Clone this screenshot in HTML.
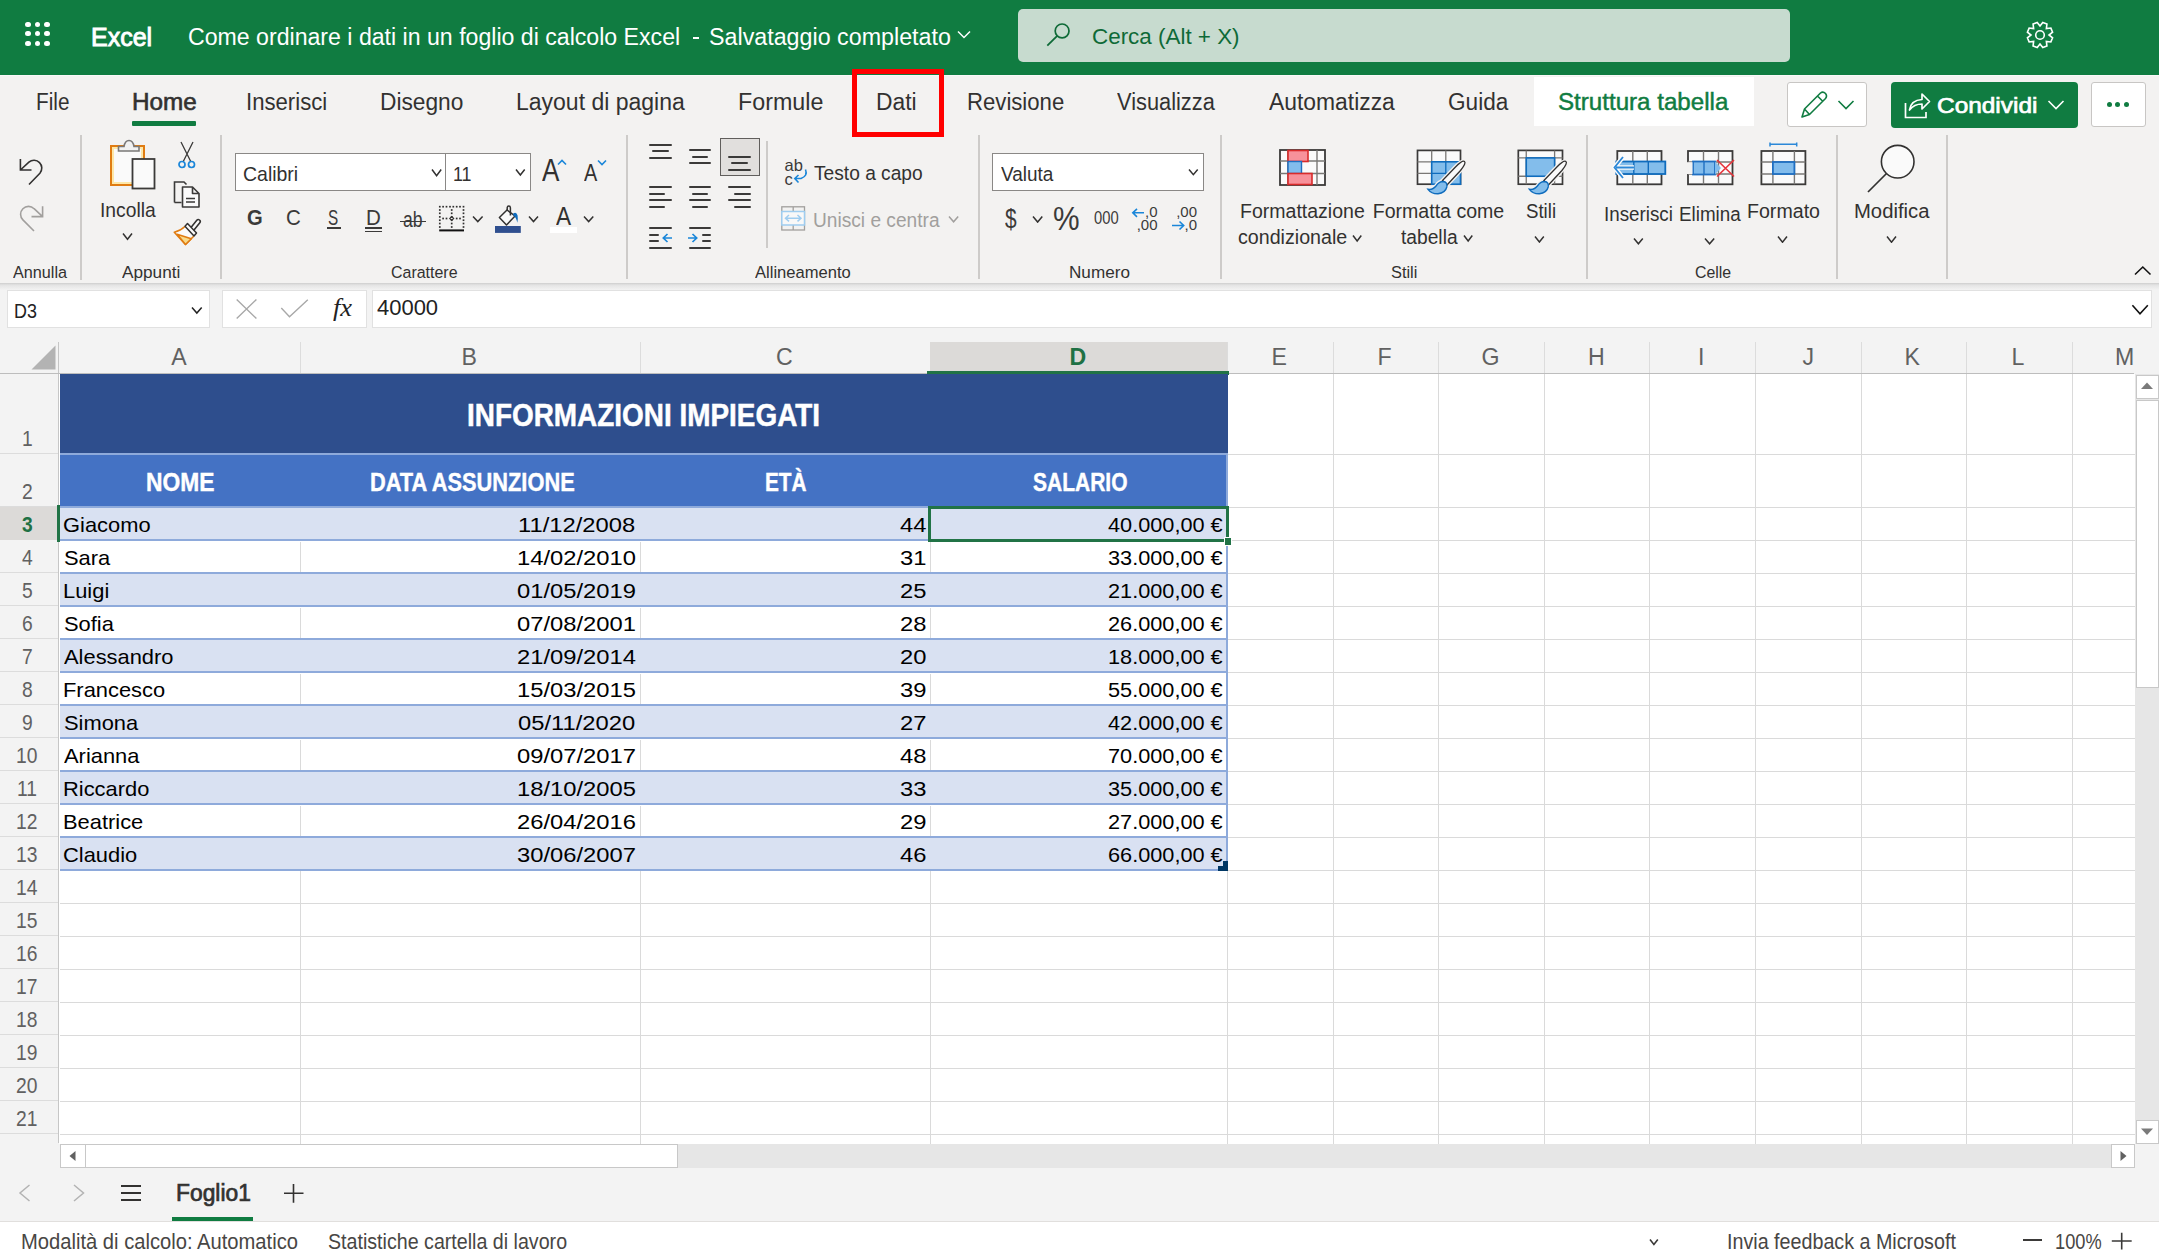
<!DOCTYPE html><html><head><meta charset="utf-8"><style>*{margin:0;padding:0}html,body{width:2159px;height:1257px;overflow:hidden;background:#fff;position:relative}div,svg{position:absolute}.t{white-space:pre;transform-origin:0 0;line-height:40px;height:40px}</style></head><body>
<div style="left:0.00px;top:0.00px;width:2159.00px;height:75.00px;background:#107c41"></div>
<div style="left:0.00px;top:75.00px;width:2159.00px;height:1.00px;background:#f8f8f8"></div>
<div style="left:25.40px;top:21.65px;width:5.20px;height:5.20px;background:#fff;border-radius:50%"></div>
<div style="left:25.40px;top:31.15px;width:5.20px;height:5.20px;background:#fff;border-radius:50%"></div>
<div style="left:25.40px;top:40.90px;width:5.20px;height:5.20px;background:#fff;border-radius:50%"></div>
<div style="left:34.90px;top:21.65px;width:5.20px;height:5.20px;background:#fff;border-radius:50%"></div>
<div style="left:34.90px;top:31.15px;width:5.20px;height:5.20px;background:#fff;border-radius:50%"></div>
<div style="left:34.90px;top:40.90px;width:5.20px;height:5.20px;background:#fff;border-radius:50%"></div>
<div style="left:44.40px;top:21.65px;width:5.20px;height:5.20px;background:#fff;border-radius:50%"></div>
<div style="left:44.40px;top:31.15px;width:5.20px;height:5.20px;background:#fff;border-radius:50%"></div>
<div style="left:44.40px;top:40.90px;width:5.20px;height:5.20px;background:#fff;border-radius:50%"></div>
<div style="left:692.50px;top:36.50px;width:6.50px;height:2.00px;background:#fff"></div>
<div style="left:1018.00px;top:9.00px;width:772.00px;height:52.50px;background:#c7dbcf;border-radius:5px"></div>
<div style="left:0.00px;top:76.00px;width:2159.00px;height:207.00px;background:#f3f2f1"></div>
<div style="left:132.00px;top:121.00px;width:64.00px;height:4.70px;background:#107c41;border-radius:1px"></div>
<div style="left:1534.00px;top:76.50px;width:220.00px;height:49.50px;background:#fff"></div>
<div style="left:1787.40px;top:82.40px;width:80.00px;height:45.00px;background:#fff;border:1px solid #c8c6c4;border-radius:3px;box-sizing:border-box"></div>
<div style="left:1891.00px;top:82.00px;width:187.00px;height:45.70px;background:#107c41;border-radius:4px"></div>
<div style="left:2091.20px;top:82.40px;width:54.50px;height:45.00px;background:#fff;border:1px solid #c8c6c4;border-radius:3px;box-sizing:border-box"></div>
<div style="left:2106.50px;top:101.70px;width:5.20px;height:5.20px;background:#107c41;border-radius:50%"></div>
<div style="left:2115.30px;top:101.70px;width:5.20px;height:5.20px;background:#107c41;border-radius:50%"></div>
<div style="left:2124.10px;top:101.70px;width:5.20px;height:5.20px;background:#107c41;border-radius:50%"></div>
<div style="left:851.50px;top:68.50px;width:92.00px;height:68.00px;border:5px solid #ff0000;box-sizing:border-box"></div>
<div style="left:80.00px;top:135.00px;width:2.00px;height:145.00px;background:#cdcbc9"></div>
<div style="left:220.00px;top:135.00px;width:2.00px;height:144.00px;background:#cdcbc9"></div>
<div style="left:626.00px;top:135.00px;width:2.00px;height:144.00px;background:#cdcbc9"></div>
<div style="left:766.00px;top:141.00px;width:2.00px;height:107.00px;background:#cdcbc9"></div>
<div style="left:978.00px;top:135.00px;width:2.00px;height:144.00px;background:#cdcbc9"></div>
<div style="left:1220.00px;top:135.00px;width:2.00px;height:144.00px;background:#cdcbc9"></div>
<div style="left:1586.00px;top:135.00px;width:2.00px;height:144.00px;background:#cdcbc9"></div>
<div style="left:1836.00px;top:135.00px;width:2.00px;height:144.00px;background:#cdcbc9"></div>
<div style="left:1946.00px;top:135.00px;width:2.00px;height:144.00px;background:#cdcbc9"></div>
<div style="left:235.20px;top:153.30px;width:296.00px;height:38.20px;background:#fff;border:1px solid #8a8886;box-sizing:border-box"></div>
<div style="left:445.00px;top:153.30px;width:1.00px;height:38.20px;background:#8a8886"></div>
<div style="left:327.20px;top:227.00px;width:13.40px;height:1.80px;background:#3b3a39"></div>
<div style="left:365.00px;top:227.00px;width:17.00px;height:1.80px;background:#3b3a39"></div>
<div style="left:365.00px;top:230.60px;width:17.00px;height:1.80px;background:#3b3a39"></div>
<div style="left:400.00px;top:220.50px;width:25.70px;height:1.60px;background:#3b3a39"></div>
<div style="left:549.90px;top:227.00px;width:26.80px;height:5.60px;background:#fff"></div>
<div style="left:649.00px;top:144.00px;width:23.00px;height:2.00px;background:#3b3a39;border-radius:1px"></div>
<div style="left:652.00px;top:150.00px;width:17.00px;height:2.00px;background:#3b3a39;border-radius:1px"></div>
<div style="left:649.00px;top:157.00px;width:23.00px;height:2.00px;background:#3b3a39;border-radius:1px"></div>
<div style="left:689.00px;top:149.00px;width:22.00px;height:2.00px;background:#3b3a39;border-radius:1px"></div>
<div style="left:692.00px;top:156.00px;width:16.00px;height:2.00px;background:#3b3a39;border-radius:1px"></div>
<div style="left:689.00px;top:162.00px;width:22.00px;height:2.00px;background:#3b3a39;border-radius:1px"></div>
<div style="left:720.20px;top:138.30px;width:39.60px;height:38.20px;background:#e1dfdd;border:1.2px solid #605e5c;box-sizing:border-box"></div>
<div style="left:728.00px;top:156.00px;width:23.00px;height:2.00px;background:#3b3a39;border-radius:1px"></div>
<div style="left:731.00px;top:162.00px;width:17.00px;height:2.00px;background:#3b3a39;border-radius:1px"></div>
<div style="left:728.00px;top:169.00px;width:23.00px;height:2.00px;background:#3b3a39;border-radius:1px"></div>
<div style="left:649.00px;top:186.00px;width:23.00px;height:2.00px;background:#3b3a39;border-radius:1px"></div>
<div style="left:649.00px;top:193.00px;width:16.00px;height:2.00px;background:#3b3a39;border-radius:1px"></div>
<div style="left:649.00px;top:199.00px;width:23.00px;height:2.00px;background:#3b3a39;border-radius:1px"></div>
<div style="left:649.00px;top:206.00px;width:16.00px;height:2.00px;background:#3b3a39;border-radius:1px"></div>
<div style="left:689.00px;top:186.00px;width:22.00px;height:2.00px;background:#3b3a39;border-radius:1px"></div>
<div style="left:692.00px;top:193.00px;width:16.00px;height:2.00px;background:#3b3a39;border-radius:1px"></div>
<div style="left:689.00px;top:199.00px;width:22.00px;height:2.00px;background:#3b3a39;border-radius:1px"></div>
<div style="left:692.00px;top:206.00px;width:16.00px;height:2.00px;background:#3b3a39;border-radius:1px"></div>
<div style="left:728.00px;top:186.00px;width:23.00px;height:2.00px;background:#3b3a39;border-radius:1px"></div>
<div style="left:734.00px;top:193.00px;width:17.00px;height:2.00px;background:#3b3a39;border-radius:1px"></div>
<div style="left:728.00px;top:199.00px;width:23.00px;height:2.00px;background:#3b3a39;border-radius:1px"></div>
<div style="left:734.00px;top:206.00px;width:17.00px;height:2.00px;background:#3b3a39;border-radius:1px"></div>
<div style="left:649.00px;top:227.00px;width:23.00px;height:2.00px;background:#3b3a39;border-radius:1px"></div>
<div style="left:649.00px;top:234.00px;width:10.00px;height:2.00px;background:#3b3a39;border-radius:1px"></div>
<div style="left:649.00px;top:240.00px;width:10.00px;height:2.00px;background:#3b3a39;border-radius:1px"></div>
<div style="left:649.00px;top:247.00px;width:23.00px;height:2.00px;background:#3b3a39;border-radius:1px"></div>
<div style="left:689.00px;top:227.00px;width:22.00px;height:2.00px;background:#3b3a39;border-radius:1px"></div>
<div style="left:702.00px;top:234.00px;width:9.00px;height:2.00px;background:#3b3a39;border-radius:1px"></div>
<div style="left:702.00px;top:240.00px;width:9.00px;height:2.00px;background:#3b3a39;border-radius:1px"></div>
<div style="left:689.00px;top:247.00px;width:22.00px;height:2.00px;background:#3b3a39;border-radius:1px"></div>
<div style="left:992.20px;top:153.30px;width:211.50px;height:38.20px;background:#fff;border:1px solid #8a8886;box-sizing:border-box"></div>
<div style="left:0.00px;top:290.00px;width:2159.00px;height:50.00px;background:#f3f3f3"></div>
<div style="left:0.00px;top:283.00px;width:2159.00px;height:7.00px;background:linear-gradient(#cecece,#e4e4e4 30%,#f3f3f3)"></div>
<div style="left:6.50px;top:290.40px;width:203.00px;height:37.80px;background:#fff;border:1px solid #e1e1e1;box-sizing:border-box"></div>
<div style="left:222.30px;top:290.40px;width:144.50px;height:37.40px;background:#fff;border:1px solid #e1e1e1;box-sizing:border-box"></div>
<div style="left:372.40px;top:290.40px;width:1779.80px;height:38.00px;background:#fff;border:1px solid #e1e1e1;box-sizing:border-box"></div>
<div style="left:0.00px;top:340.00px;width:2159.00px;height:34.00px;background:#f3f3f3"></div>
<div style="left:0.00px;top:374.00px;width:59.00px;height:770.00px;background:#f3f3f3"></div>
<div style="left:60.00px;top:374.00px;width:2075.00px;height:770.00px;background:#fff"></div>
<div style="left:299.50px;top:342.00px;width:1.00px;height:31.00px;background:#dcdcdc"></div>
<div style="left:639.50px;top:342.00px;width:1.00px;height:31.00px;background:#dcdcdc"></div>
<div style="left:929.50px;top:342.00px;width:1.00px;height:31.00px;background:#dcdcdc"></div>
<div style="left:1226.50px;top:342.00px;width:1.00px;height:31.00px;background:#dcdcdc"></div>
<div style="left:1332.50px;top:342.00px;width:1.00px;height:31.00px;background:#dcdcdc"></div>
<div style="left:1437.50px;top:342.00px;width:1.00px;height:31.00px;background:#dcdcdc"></div>
<div style="left:1543.50px;top:342.00px;width:1.00px;height:31.00px;background:#dcdcdc"></div>
<div style="left:1648.50px;top:342.00px;width:1.00px;height:31.00px;background:#dcdcdc"></div>
<div style="left:1754.50px;top:342.00px;width:1.00px;height:31.00px;background:#dcdcdc"></div>
<div style="left:1860.50px;top:342.00px;width:1.00px;height:31.00px;background:#dcdcdc"></div>
<div style="left:1965.50px;top:342.00px;width:1.00px;height:31.00px;background:#dcdcdc"></div>
<div style="left:2071.50px;top:342.00px;width:1.00px;height:31.00px;background:#dcdcdc"></div>
<div style="left:58.00px;top:342.00px;width:1.30px;height:801.00px;background:#c6c6c6"></div>
<div style="left:0.00px;top:372.50px;width:2134.00px;height:1.30px;background:#bdbdbd"></div>
<div style="left:930.00px;top:342.00px;width:297.00px;height:31.00px;background:#dcdad8"></div>
<div style="left:927.00px;top:371.00px;width:302.00px;height:3.50px;background:#217346"></div>
<div style="left:0.00px;top:453.00px;width:58.00px;height:1.00px;background:#dcdcdc"></div>
<div style="left:0.00px;top:506.00px;width:58.00px;height:1.00px;background:#dcdcdc"></div>
<div style="left:0.00px;top:539.00px;width:58.00px;height:1.00px;background:#dcdcdc"></div>
<div style="left:0.00px;top:572.00px;width:58.00px;height:1.00px;background:#dcdcdc"></div>
<div style="left:0.00px;top:605.00px;width:58.00px;height:1.00px;background:#dcdcdc"></div>
<div style="left:0.00px;top:638.00px;width:58.00px;height:1.00px;background:#dcdcdc"></div>
<div style="left:0.00px;top:671.00px;width:58.00px;height:1.00px;background:#dcdcdc"></div>
<div style="left:0.00px;top:704.00px;width:58.00px;height:1.00px;background:#dcdcdc"></div>
<div style="left:0.00px;top:737.00px;width:58.00px;height:1.00px;background:#dcdcdc"></div>
<div style="left:0.00px;top:770.00px;width:58.00px;height:1.00px;background:#dcdcdc"></div>
<div style="left:0.00px;top:803.00px;width:58.00px;height:1.00px;background:#dcdcdc"></div>
<div style="left:0.00px;top:836.00px;width:58.00px;height:1.00px;background:#dcdcdc"></div>
<div style="left:0.00px;top:869.00px;width:58.00px;height:1.00px;background:#dcdcdc"></div>
<div style="left:0.00px;top:902.00px;width:58.00px;height:1.00px;background:#dcdcdc"></div>
<div style="left:0.00px;top:935.00px;width:58.00px;height:1.00px;background:#dcdcdc"></div>
<div style="left:0.00px;top:968.00px;width:58.00px;height:1.00px;background:#dcdcdc"></div>
<div style="left:0.00px;top:1001.00px;width:58.00px;height:1.00px;background:#dcdcdc"></div>
<div style="left:0.00px;top:1034.00px;width:58.00px;height:1.00px;background:#dcdcdc"></div>
<div style="left:0.00px;top:1067.00px;width:58.00px;height:1.00px;background:#dcdcdc"></div>
<div style="left:0.00px;top:1100.00px;width:58.00px;height:1.00px;background:#dcdcdc"></div>
<div style="left:0.00px;top:1133.00px;width:58.00px;height:1.00px;background:#dcdcdc"></div>
<div style="left:0.00px;top:507.00px;width:57.00px;height:33.00px;background:#dcdad8"></div>
<div style="left:56.80px;top:505.00px;width:3.00px;height:37.00px;background:#217346"></div>
<div style="left:300.00px;top:374.00px;width:1.00px;height:770.00px;background:#dadada"></div>
<div style="left:640.00px;top:374.00px;width:1.00px;height:770.00px;background:#dadada"></div>
<div style="left:930.00px;top:374.00px;width:1.00px;height:770.00px;background:#dadada"></div>
<div style="left:1227.00px;top:374.00px;width:1.00px;height:770.00px;background:#dadada"></div>
<div style="left:1333.00px;top:374.00px;width:1.00px;height:770.00px;background:#dadada"></div>
<div style="left:1438.00px;top:374.00px;width:1.00px;height:770.00px;background:#dadada"></div>
<div style="left:1544.00px;top:374.00px;width:1.00px;height:770.00px;background:#dadada"></div>
<div style="left:1649.00px;top:374.00px;width:1.00px;height:770.00px;background:#dadada"></div>
<div style="left:1755.00px;top:374.00px;width:1.00px;height:770.00px;background:#dadada"></div>
<div style="left:1861.00px;top:374.00px;width:1.00px;height:770.00px;background:#dadada"></div>
<div style="left:1966.00px;top:374.00px;width:1.00px;height:770.00px;background:#dadada"></div>
<div style="left:2072.00px;top:374.00px;width:1.00px;height:770.00px;background:#dadada"></div>
<div style="left:60.00px;top:454.00px;width:2075.00px;height:1.00px;background:#dadada"></div>
<div style="left:60.00px;top:507.00px;width:2075.00px;height:1.00px;background:#dadada"></div>
<div style="left:60.00px;top:540.00px;width:2075.00px;height:1.00px;background:#dadada"></div>
<div style="left:60.00px;top:573.00px;width:2075.00px;height:1.00px;background:#dadada"></div>
<div style="left:60.00px;top:606.00px;width:2075.00px;height:1.00px;background:#dadada"></div>
<div style="left:60.00px;top:639.00px;width:2075.00px;height:1.00px;background:#dadada"></div>
<div style="left:60.00px;top:672.00px;width:2075.00px;height:1.00px;background:#dadada"></div>
<div style="left:60.00px;top:705.00px;width:2075.00px;height:1.00px;background:#dadada"></div>
<div style="left:60.00px;top:738.00px;width:2075.00px;height:1.00px;background:#dadada"></div>
<div style="left:60.00px;top:771.00px;width:2075.00px;height:1.00px;background:#dadada"></div>
<div style="left:60.00px;top:804.00px;width:2075.00px;height:1.00px;background:#dadada"></div>
<div style="left:60.00px;top:837.00px;width:2075.00px;height:1.00px;background:#dadada"></div>
<div style="left:60.00px;top:870.00px;width:2075.00px;height:1.00px;background:#dadada"></div>
<div style="left:60.00px;top:903.00px;width:2075.00px;height:1.00px;background:#dadada"></div>
<div style="left:60.00px;top:936.00px;width:2075.00px;height:1.00px;background:#dadada"></div>
<div style="left:60.00px;top:969.00px;width:2075.00px;height:1.00px;background:#dadada"></div>
<div style="left:60.00px;top:1002.00px;width:2075.00px;height:1.00px;background:#dadada"></div>
<div style="left:60.00px;top:1035.00px;width:2075.00px;height:1.00px;background:#dadada"></div>
<div style="left:60.00px;top:1068.00px;width:2075.00px;height:1.00px;background:#dadada"></div>
<div style="left:60.00px;top:1101.00px;width:2075.00px;height:1.00px;background:#dadada"></div>
<div style="left:60.00px;top:1134.00px;width:2075.00px;height:1.00px;background:#dadada"></div>
<div style="left:60.00px;top:374.00px;width:1168.00px;height:80.00px;background:#2e4e8d"></div>
<div style="left:60.00px;top:453.00px;width:1168.00px;height:2.00px;background:#8eaadb"></div>
<div style="left:60.00px;top:455.00px;width:1168.00px;height:51.50px;background:#4472c4"></div>
<div style="left:60.00px;top:507.00px;width:1168.00px;height:33.00px;background:#d9e1f2"></div>
<div style="left:60.00px;top:506.00px;width:1168.00px;height:2.00px;background:#8eaadb"></div>
<div style="left:60.00px;top:540.00px;width:1168.00px;height:33.00px;background:#fff"></div>
<div style="left:60.00px;top:539.00px;width:1168.00px;height:2.00px;background:#8eaadb"></div>
<div style="left:300.00px;top:542.00px;width:1.00px;height:31.00px;background:#dadada"></div>
<div style="left:640.00px;top:542.00px;width:1.00px;height:31.00px;background:#dadada"></div>
<div style="left:930.00px;top:542.00px;width:1.00px;height:31.00px;background:#dadada"></div>
<div style="left:60.00px;top:573.00px;width:1168.00px;height:33.00px;background:#d9e1f2"></div>
<div style="left:60.00px;top:572.00px;width:1168.00px;height:2.00px;background:#8eaadb"></div>
<div style="left:60.00px;top:606.00px;width:1168.00px;height:33.00px;background:#fff"></div>
<div style="left:60.00px;top:605.00px;width:1168.00px;height:2.00px;background:#8eaadb"></div>
<div style="left:300.00px;top:608.00px;width:1.00px;height:31.00px;background:#dadada"></div>
<div style="left:640.00px;top:608.00px;width:1.00px;height:31.00px;background:#dadada"></div>
<div style="left:930.00px;top:608.00px;width:1.00px;height:31.00px;background:#dadada"></div>
<div style="left:60.00px;top:639.00px;width:1168.00px;height:33.00px;background:#d9e1f2"></div>
<div style="left:60.00px;top:638.00px;width:1168.00px;height:2.00px;background:#8eaadb"></div>
<div style="left:60.00px;top:672.00px;width:1168.00px;height:33.00px;background:#fff"></div>
<div style="left:60.00px;top:671.00px;width:1168.00px;height:2.00px;background:#8eaadb"></div>
<div style="left:300.00px;top:674.00px;width:1.00px;height:31.00px;background:#dadada"></div>
<div style="left:640.00px;top:674.00px;width:1.00px;height:31.00px;background:#dadada"></div>
<div style="left:930.00px;top:674.00px;width:1.00px;height:31.00px;background:#dadada"></div>
<div style="left:60.00px;top:705.00px;width:1168.00px;height:33.00px;background:#d9e1f2"></div>
<div style="left:60.00px;top:704.00px;width:1168.00px;height:2.00px;background:#8eaadb"></div>
<div style="left:60.00px;top:738.00px;width:1168.00px;height:33.00px;background:#fff"></div>
<div style="left:60.00px;top:737.00px;width:1168.00px;height:2.00px;background:#8eaadb"></div>
<div style="left:300.00px;top:740.00px;width:1.00px;height:31.00px;background:#dadada"></div>
<div style="left:640.00px;top:740.00px;width:1.00px;height:31.00px;background:#dadada"></div>
<div style="left:930.00px;top:740.00px;width:1.00px;height:31.00px;background:#dadada"></div>
<div style="left:60.00px;top:771.00px;width:1168.00px;height:33.00px;background:#d9e1f2"></div>
<div style="left:60.00px;top:770.00px;width:1168.00px;height:2.00px;background:#8eaadb"></div>
<div style="left:60.00px;top:804.00px;width:1168.00px;height:33.00px;background:#fff"></div>
<div style="left:60.00px;top:803.00px;width:1168.00px;height:2.00px;background:#8eaadb"></div>
<div style="left:300.00px;top:806.00px;width:1.00px;height:31.00px;background:#dadada"></div>
<div style="left:640.00px;top:806.00px;width:1.00px;height:31.00px;background:#dadada"></div>
<div style="left:930.00px;top:806.00px;width:1.00px;height:31.00px;background:#dadada"></div>
<div style="left:60.00px;top:837.00px;width:1168.00px;height:33.00px;background:#d9e1f2"></div>
<div style="left:60.00px;top:836.00px;width:1168.00px;height:2.00px;background:#8eaadb"></div>
<div style="left:60.00px;top:869.00px;width:1168.00px;height:2.00px;background:#8eaadb"></div>
<div style="left:1226.00px;top:455.00px;width:2.00px;height:415.00px;background:#8eaadb"></div>
<div style="left:1223.00px;top:861.00px;width:5.00px;height:10.00px;background:#003764"></div>
<div style="left:1218.00px;top:866.00px;width:10.00px;height:5.00px;background:#003764"></div>
<div style="left:927.50px;top:505.70px;width:301.50px;height:36.00px;border:3px solid #217346;box-sizing:border-box"></div>
<div style="left:1224.00px;top:537.00px;width:8.00px;height:9.00px;background:#fff"></div>
<div style="left:1225.00px;top:538.00px;width:6.00px;height:7.00px;background:#217346"></div>
<div style="left:2135.00px;top:374.00px;width:24.00px;height:770.00px;background:#e6e6e6"></div>
<div style="left:2135.50px;top:374.50px;width:23.50px;height:24.50px;background:#fff;border:1px solid #c8c8c8;box-sizing:border-box"></div>
<div style="left:2135.50px;top:399.50px;width:23.50px;height:288.00px;background:#fff;border:1px solid #c8c8c8;box-sizing:border-box"></div>
<div style="left:2135.50px;top:1119.50px;width:23.50px;height:24.00px;background:#fff;border:1px solid #c8c8c8;box-sizing:border-box"></div>
<div style="left:0.00px;top:1143.50px;width:2159.00px;height:79.00px;background:#f3f3f3"></div>
<div style="left:60.00px;top:1144.30px;width:2075.00px;height:23.30px;background:#e6e6e6"></div>
<div style="left:60.30px;top:1144.30px;width:618.00px;height:23.30px;background:#fff;border:1px solid #c8c8c8;box-sizing:border-box"></div>
<div style="left:84.50px;top:1144.30px;width:1.30px;height:23.30px;background:#c8c8c8"></div>
<div style="left:2110.50px;top:1144.30px;width:24.00px;height:23.30px;background:#fff;border:1px solid #c8c8c8;box-sizing:border-box"></div>
<div style="left:121.00px;top:1185.00px;width:20.00px;height:2.00px;background:#323130"></div>
<div style="left:121.00px;top:1192.00px;width:20.00px;height:2.00px;background:#323130"></div>
<div style="left:121.00px;top:1199.00px;width:20.00px;height:2.00px;background:#323130"></div>
<div style="left:171.90px;top:1217.30px;width:81.00px;height:3.80px;background:#107c41"></div>
<div style="left:0.00px;top:1221.00px;width:2159.00px;height:36.00px;background:#fff"></div>
<div style="left:0.00px;top:1221.00px;width:2159.00px;height:1.00px;background:#e1dfdd"></div>
<div style="left:2023.40px;top:1239.00px;width:18.70px;height:1.60px;background:#3b3a39"></div>
<svg style="left:955.00px;top:28.00px" width="18.00" height="14.00" viewBox="0 0 18.00 14.00"><path d="M3 3.5 L9 9.5 L15 3.5" fill="none" stroke="#fff" stroke-width="1.5"/></svg>
<svg style="left:1044.00px;top:20.00px" width="30.00" height="30.00" viewBox="0 0 30.00 30.00"><circle cx="18.1" cy="10.9" r="6.9" fill="none" stroke="#0e6a37" stroke-width="1.7"/><path d="M13.2 15.8 L3.3 25.7" stroke="#0e6a37" stroke-width="1.8" fill="none"/></svg>
<svg style="left:2020.10px;top:14.90px" width="40.00" height="40.00" viewBox="0 0 40.00 40.00"><path d="M22.79 7.41 L26.93 9.12 L26.36 13.64 L30.88 13.07 L32.59 17.21 L29.00 20.00 L32.59 22.79 L30.88 26.93 L26.36 26.36 L26.93 30.88 L22.79 32.59 L20.00 29.00 L17.21 32.59 L13.07 30.88 L13.64 26.36 L9.12 26.93 L7.41 22.79 L11.00 20.00 L7.41 17.21 L9.12 13.07 L13.64 13.64 L13.07 9.12 L17.21 7.41 L20.00 11.00Z" fill="none" stroke="#fff" stroke-width="1.6" stroke-linejoin="miter"/><circle cx="20" cy="20" r="4.3" fill="none" stroke="#fff" stroke-width="1.6"/></svg>
<svg style="left:1798.00px;top:90.00px" width="32.00" height="30.00" viewBox="0 0 32.00 30.00"><path d="M4 27 L6.5 19 L22.5 3 Q25 1 27.5 3.5 Q29.5 6 27.5 8.5 L11.5 24.5 Z M19.5 6 L24.5 11 M6.5 19 L11.5 24.5" fill="none" stroke="#107c41" stroke-width="1.6" stroke-linejoin="round"/></svg>
<svg style="left:1836.00px;top:98.00px" width="20.00" height="14.00" viewBox="0 0 20.00 14.00"><path d="M2.5 3 L10 10.5 L17.5 3" fill="none" stroke="#107c41" stroke-width="1.6"/></svg>
<svg style="left:1902.00px;top:90.00px" width="30.00" height="30.00" viewBox="0 0 30.00 30.00"><path d="M3.5 13 V27.5 H24 V22" fill="none" stroke="#fff" stroke-width="1.7"/><path d="M7.5 20 Q9 10 20 9.5 V4 L27.5 11.5 L20 19 V14 Q12 14 7.5 20 Z" fill="none" stroke="#fff" stroke-width="1.7" stroke-linejoin="round"/></svg>
<svg style="left:2046.00px;top:98.00px" width="20.00" height="14.00" viewBox="0 0 20.00 14.00"><path d="M2.5 3 L10 10.5 L17.5 3" fill="none" stroke="#fff" stroke-width="1.6"/></svg>
<svg style="left:430.80px;top:167.50px" width="11.20" height="9.20" viewBox="0 0 11.20 9.20"><path d="M1 1.5 L5.60 7.70 L10.20 1.5" fill="none" stroke="#323130" stroke-width="1.5"/></svg>
<svg style="left:515.20px;top:168.00px" width="10.70" height="8.50" viewBox="0 0 10.70 8.50"><path d="M1 1.5 L5.35 7.00 L9.70 1.5" fill="none" stroke="#323130" stroke-width="1.5"/></svg>
<svg style="left:556.00px;top:158.00px" width="12.00" height="9.00" viewBox="0 0 12.00 9.00"><path d="M2 6.5 L6 2.5 L10 6.5" fill="none" stroke="#1a86d9" stroke-width="1.6"/></svg>
<svg style="left:596.00px;top:158.00px" width="12.00" height="9.00" viewBox="0 0 12.00 9.00"><path d="M2 2.5 L6 6.5 L10 2.5" fill="none" stroke="#1a86d9" stroke-width="1.6"/></svg>
<svg style="left:437.00px;top:204.00px" width="30.00" height="30.00" viewBox="0 0 30.00 30.00"><rect x="1.95" y="1.85" width="1.7" height="1.7" fill="#323130"/><rect x="5.25" y="1.85" width="1.7" height="1.7" fill="#323130"/><rect x="8.65" y="1.85" width="1.7" height="1.7" fill="#323130"/><rect x="12.15" y="1.85" width="1.7" height="1.7" fill="#323130"/><rect x="15.45" y="1.85" width="1.7" height="1.7" fill="#323130"/><rect x="18.85" y="1.85" width="1.7" height="1.7" fill="#323130"/><rect x="22.15" y="1.85" width="1.7" height="1.7" fill="#323130"/><rect x="25.65" y="1.85" width="1.7" height="1.7" fill="#323130"/><rect x="1.95" y="5.15" width="1.7" height="1.7" fill="#323130"/><rect x="13.85" y="5.15" width="1.7" height="1.7" fill="#323130"/><rect x="25.65" y="5.15" width="1.7" height="1.7" fill="#323130"/><rect x="1.95" y="8.45" width="1.7" height="1.7" fill="#323130"/><rect x="13.85" y="8.45" width="1.7" height="1.7" fill="#323130"/><rect x="25.65" y="8.45" width="1.7" height="1.7" fill="#323130"/><rect x="1.95" y="12.05" width="1.7" height="1.7" fill="#323130"/><rect x="13.85" y="12.05" width="1.7" height="1.7" fill="#323130"/><rect x="25.65" y="12.05" width="1.7" height="1.7" fill="#323130"/><rect x="1.95" y="15.35" width="1.7" height="1.7" fill="#323130"/><rect x="13.85" y="15.35" width="1.7" height="1.7" fill="#323130"/><rect x="25.65" y="15.35" width="1.7" height="1.7" fill="#323130"/><rect x="1.95" y="18.65" width="1.7" height="1.7" fill="#323130"/><rect x="13.85" y="18.65" width="1.7" height="1.7" fill="#323130"/><rect x="25.65" y="18.65" width="1.7" height="1.7" fill="#323130"/><rect x="1.95" y="22.15" width="1.7" height="1.7" fill="#323130"/><rect x="13.85" y="22.15" width="1.7" height="1.7" fill="#323130"/><rect x="25.65" y="22.15" width="1.7" height="1.7" fill="#323130"/><rect x="5.25" y="13.65" width="1.7" height="1.7" fill="#323130"/><rect x="8.65" y="13.65" width="1.7" height="1.7" fill="#323130"/><rect x="18.85" y="13.65" width="1.7" height="1.7" fill="#323130"/><rect x="22.15" y="13.65" width="1.7" height="1.7" fill="#323130"/><path d="M14.7 12.5 L16.7 14.5 L14.7 16.5 L12.7 14.5 Z" fill="none" stroke="#323130" stroke-width="1.1"/><rect x="2.2" y="25.4" width="24.8" height="2" fill="#111"/></svg>
<svg style="left:472.40px;top:214.90px" width="11.60" height="8.10" viewBox="0 0 11.60 8.10"><path d="M1 1.5 L5.80 6.60 L10.60 1.5" fill="none" stroke="#323130" stroke-width="1.5"/></svg>
<svg style="left:495.00px;top:204.00px" width="28.00" height="30.00" viewBox="0 0 28.00 30.00"><path d="M4.4 13.5 L12 6 L20 12 L11.5 21 Z" fill="#fafafa" stroke="#323130" stroke-width="1.5" stroke-linejoin="round"/><path d="M12.2 6.5 V3.6 Q12.4 2.1 13.8 2.1 Q15.3 2.1 15.4 3.8 V11.4" fill="none" stroke="#323130" stroke-width="1.5"/><path d="M18 9.8 Q21.3 7.3 22.6 11.5 Q23.2 15 22.3 18.8 Q21.2 13.5 18.6 11.8 Z" fill="#0f6cbd"/><rect x="0" y="22" width="25.8" height="6.9" fill="#2f4f8f"/></svg>
<svg style="left:528.00px;top:214.90px" width="11.00" height="8.10" viewBox="0 0 11.00 8.10"><path d="M1 1.5 L5.50 6.60 L10.00 1.5" fill="none" stroke="#323130" stroke-width="1.5"/></svg>
<svg style="left:582.70px;top:214.90px" width="11.30" height="8.10" viewBox="0 0 11.30 8.10"><path d="M1 1.5 L5.65 6.60 L10.30 1.5" fill="none" stroke="#323130" stroke-width="1.5"/></svg>
<svg style="left:660.00px;top:231.00px" width="14.00" height="14.00" viewBox="0 0 14.00 14.00"><path d="M12 7 H3.5 M7.5 3 L3.3 7 L7.5 11" fill="none" stroke="#1a86d9" stroke-width="1.7"/></svg>
<svg style="left:686.00px;top:231.00px" width="14.00" height="14.00" viewBox="0 0 14.00 14.00"><path d="M2 7 H10.5 M6.5 3 L10.7 7 L6.5 11" fill="none" stroke="#1a86d9" stroke-width="1.7"/></svg>
<svg style="left:783.00px;top:156.00px" width="28.00" height="32.00" viewBox="0 0 28.00 32.00"><text x="1.5" y="14.8" font-family="Liberation Sans" font-size="16.5" fill="#3b3a39">ab</text><text x="1.5" y="28.8" font-family="Liberation Sans" font-size="16.5" fill="#3b3a39">c</text><path d="M22.5 13.5 Q25 20 18 22.5 H12 M15.5 19 L11.8 22.5 L15.5 26.5" fill="none" stroke="#1a86d9" stroke-width="1.6"/></svg>
<svg style="left:780.00px;top:205.00px" width="27.00" height="27.00" viewBox="0 0 27.00 27.00"><rect x="1.8" y="1.8" width="22.7" height="23.2" fill="none" stroke="#a19f9d" stroke-width="1.3"/><path d="M13.2 2 V7 M13.2 20 V25" stroke="#a19f9d" stroke-width="1.3"/><rect x="1.8" y="6.5" width="22.7" height="13.5" fill="#f8f8f8" stroke="#9fcdf0" stroke-width="1.5"/><path d="M5.5 13.2 H21 M9 10 L5.5 13.2 L9 16.4 M17.5 10 L21 13.2 L17.5 16.4" fill="none" stroke="#9fcdf0" stroke-width="1.5"/></svg>
<svg style="left:948.00px;top:215.00px" width="11.20" height="8.30" viewBox="0 0 11.20 8.30"><path d="M1 1.5 L5.60 6.80 L10.20 1.5" fill="none" stroke="#a19f9d" stroke-width="1.5"/></svg>
<svg style="left:1188.00px;top:168.00px" width="10.70" height="8.20" viewBox="0 0 10.70 8.20"><path d="M1 1.5 L5.35 6.70 L9.70 1.5" fill="none" stroke="#323130" stroke-width="1.5"/></svg>
<svg style="left:1031.70px;top:214.90px" width="11.30" height="8.60" viewBox="0 0 11.30 8.60"><path d="M1 1.5 L5.65 7.10 L10.30 1.5" fill="none" stroke="#323130" stroke-width="1.5"/></svg>
<svg style="left:1129.00px;top:203.00px" width="32.00" height="30.00" viewBox="0 0 32.00 30.00"><text x="28.5" y="14" text-anchor="end" font-family="Liberation Sans" font-size="15" fill="#3b3a39">,0</text><text x="28.5" y="27" text-anchor="end" font-family="Liberation Sans" font-size="15" fill="#3b3a39">,00</text><path d="M15 9.8 H4 M8 5.8 L3.8 9.8 L8 13.8" fill="none" stroke="#1a86d9" stroke-width="1.6"/></svg>
<svg style="left:1169.00px;top:203.00px" width="32.00" height="30.00" viewBox="0 0 32.00 30.00"><text x="28" y="14" text-anchor="end" font-family="Liberation Sans" font-size="15" fill="#3b3a39">,00</text><text x="28" y="27" text-anchor="end" font-family="Liberation Sans" font-size="15" fill="#3b3a39">,0</text><path d="M3 22.5 H14.5 M10.5 18.5 L14.7 22.5 L10.5 26.5" fill="none" stroke="#1a86d9" stroke-width="1.6"/></svg>
<svg style="left:1279.00px;top:149.00px" width="47.00" height="37.00" viewBox="0 0 47.00 37.00"><rect x="1" y="1" width="45.0" height="35.0" fill="#fafafa" stroke="#3b3a39" stroke-width="1.8"/><path d="M8.8 1 V36.0" stroke="#7a7876" stroke-width="1.4"/><path d="M38.0 1 V36.0" stroke="#7a7876" stroke-width="1.4"/><path d="M1 12.0 H46.0" stroke="#7a7876" stroke-width="1.4"/><path d="M1 24.5 H46.0" stroke="#7a7876" stroke-width="1.4"/><rect x="9" y="1.5" width="20" height="11" fill="#f7919a" stroke="#d92b2b" stroke-width="1.6"/><rect x="9" y="12.5" width="13.5" height="12" fill="#82bcec" stroke="#1f6fc2" stroke-width="1.4"/><rect x="9" y="24.5" width="24" height="11" fill="#f7919a" stroke="#d92b2b" stroke-width="1.6"/></svg>
<svg style="left:1400.00px;top:140.00px" width="180.00" height="60.00" viewBox="0 0 180.00 60.00"><rect x="17.5" y="10.4" width="43" height="33.8" fill="#fafafa" stroke="#3b3a39" stroke-width="1.7"/><path d="M31.7 10.4 V44.2 M45.8 10.4 V44.2 M17.5 21.8 H60.5 M17.5 33.3 H60.5" stroke="#7a7876" stroke-width="1.3"/><rect x="31.7" y="21.8" width="28.8" height="22.4" fill="#83bdeb" stroke="#0f6cbd" stroke-width="1.6"/><path d="M45.8 21.8 V44.2 M31.7 33.3 H60.5" stroke="#0f6cbd" stroke-width="1.3"/><g transform="translate(0.0,0)"><path d="M64.5 21.5 Q66.5 23 60.5 30.5 L47 45 L42.5 40.5 L55.5 27 Q62.5 20 64.5 21.5 Z" fill="none" stroke="#f3f2f1" stroke-width="4"/><path d="M28 49.3 Q33 50 36 46 Q39 41.5 43 41.5 Q47.8 42 46.8 47 Q45.3 53 38 53.8 Q31.5 54 28 49.3 Z" fill="none" stroke="#f3f2f1" stroke-width="4"/><path d="M64.5 21.5 Q66.5 23 60.5 30.5 L47 45 L42.5 40.5 L55.5 27 Q62.5 20 64.5 21.5 Z" fill="#fafafa" stroke="#323130" stroke-width="1.3"/><path d="M28 49.3 Q33 50 36 46 Q39 41.5 43 41.5 Q47.8 42 46.8 47 Q45.3 53 38 53.8 Q31.5 54 28 49.3 Z" fill="#83bdeb" stroke="#0f6cbd" stroke-width="1.4"/></g></svg>
<svg style="left:1400.00px;top:140.00px" width="180.00" height="60.00" viewBox="0 0 180.00 60.00"><rect x="118.3" y="10.4" width="44.2" height="33.8" fill="#fafafa" stroke="#3b3a39" stroke-width="1.7"/><path d="M126.25 10.4 V44.2 M154.6 10.4 V44.2 M118.3 17.9 H162.5 M118.3 36.25 H162.5" stroke="#7a7876" stroke-width="1.3"/><rect x="126.25" y="17.9" width="28.35" height="18.35" fill="#83bdeb" stroke="#0f6cbd" stroke-width="1.6"/><g transform="translate(101.4,0)"><path d="M64.5 21.5 Q66.5 23 60.5 30.5 L47 45 L42.5 40.5 L55.5 27 Q62.5 20 64.5 21.5 Z" fill="none" stroke="#f3f2f1" stroke-width="4"/><path d="M28 49.3 Q33 50 36 46 Q39 41.5 43 41.5 Q47.8 42 46.8 47 Q45.3 53 38 53.8 Q31.5 54 28 49.3 Z" fill="none" stroke="#f3f2f1" stroke-width="4"/><path d="M64.5 21.5 Q66.5 23 60.5 30.5 L47 45 L42.5 40.5 L55.5 27 Q62.5 20 64.5 21.5 Z" fill="#fafafa" stroke="#323130" stroke-width="1.3"/><path d="M28 49.3 Q33 50 36 46 Q39 41.5 43 41.5 Q47.8 42 46.8 47 Q45.3 53 38 53.8 Q31.5 54 28 49.3 Z" fill="#83bdeb" stroke="#0f6cbd" stroke-width="1.4"/></g></svg>
<svg style="left:1351.60px;top:234.40px" width="10.30" height="8.50" viewBox="0 0 10.30 8.50"><path d="M1 1.5 L5.15 7.00 L9.30 1.5" fill="none" stroke="#323130" stroke-width="1.5"/></svg>
<svg style="left:1462.50px;top:234.40px" width="10.30" height="8.50" viewBox="0 0 10.30 8.50"><path d="M1 1.5 L5.15 7.00 L9.30 1.5" fill="none" stroke="#323130" stroke-width="1.5"/></svg>
<svg style="left:1534.00px;top:234.50px" width="10.80" height="8.50" viewBox="0 0 10.80 8.50"><path d="M1 1.5 L5.40 7.00 L9.80 1.5" fill="none" stroke="#323130" stroke-width="1.5"/></svg>
<svg style="left:1612.00px;top:149.50px" width="56.00" height="37.00" viewBox="0 0 56.00 37.00"><g transform="translate(4.3,0)"><rect x="1" y="1" width="44.2" height="33.3" fill="#fafafa" stroke="#3b3a39" stroke-width="1.8"/><path d="M16.5 1 V34.3" stroke="#7a7876" stroke-width="1.4"/><path d="M31.0 1 V34.3" stroke="#7a7876" stroke-width="1.4"/><path d="M1 12.0 H45.2" stroke="#7a7876" stroke-width="1.4"/><path d="M1 24.0 H45.2" stroke="#7a7876" stroke-width="1.4"/><rect x="0" y="11.5" width="49" height="12.5" fill="#83bdeb" stroke="#0f6cbd" stroke-width="1.8"/><path d="M17.5 12 V24 M32 12 V24" stroke="#0f6cbd" stroke-width="1.4"/></g><path d="M22 17.5 H4 M11 7 L2.5 17.5 L11 28" fill="none" stroke="#fafafa" stroke-width="4.5"/><path d="M22 17.5 H4 M11 7 L2.5 17.5 L11 28" fill="none" stroke="#2b88d8" stroke-width="1.8"/></svg>
<svg style="left:1687.00px;top:149.50px" width="50.00" height="37.00" viewBox="0 0 50.00 37.00"><rect x="1" y="1" width="44.5" height="33.3" fill="#fafafa" stroke="#3b3a39" stroke-width="1.8"/><path d="M16.5 1 V34.3" stroke="#7a7876" stroke-width="1.4"/><path d="M31.5 1 V34.3" stroke="#7a7876" stroke-width="1.4"/><path d="M1 12.0 H45.5" stroke="#7a7876" stroke-width="1.4"/><path d="M1 24.0 H45.5" stroke="#7a7876" stroke-width="1.4"/><rect x="6" y="11.5" width="22" height="13" fill="#82bcec" stroke="#1f6fc2" stroke-width="1.8"/><path d="M17 12 V24" stroke="#1f6fc2" stroke-width="1.4"/><path d="M28 11.5 L34 18 L28 24.5 Z" fill="#82bcec"/><path d="M30 10 L47 26.5 M47 10 L30 26.5" stroke="#e8333a" stroke-width="1.6"/><rect x="0" y="12.2" width="5.5" height="11.8" fill="#f3f2f1"/></svg>
<svg style="left:1760.00px;top:140.50px" width="48.00" height="45.00" viewBox="0 0 48.00 45.00"><path d="M10 1.5 V5.5 M10 3.3 H36.7 M36.7 1.5 V5.5" stroke="#2b88d8" stroke-width="1.5" fill="none"/><g transform="translate(0.4,9)"><rect x="1" y="1" width="44.0" height="33.3" fill="#fafafa" stroke="#3b3a39" stroke-width="1.8"/><path d="M12.5 1 V34.3" stroke="#7a7876" stroke-width="1.4"/><path d="M34.0 1 V34.3" stroke="#7a7876" stroke-width="1.4"/><path d="M1 12.0 H45.0" stroke="#7a7876" stroke-width="1.4"/><path d="M1 24.0 H45.0" stroke="#7a7876" stroke-width="1.4"/><rect x="12.5" y="12" width="21.5" height="12" fill="#82bcec" stroke="#1f6fc2" stroke-width="1.8"/></g></svg>
<svg style="left:1633.20px;top:236.90px" width="10.80" height="8.30" viewBox="0 0 10.80 8.30"><path d="M1 1.5 L5.40 6.80 L9.80 1.5" fill="none" stroke="#323130" stroke-width="1.5"/></svg>
<svg style="left:1704.00px;top:236.90px" width="11.20" height="8.30" viewBox="0 0 11.20 8.30"><path d="M1 1.5 L5.60 6.80 L10.20 1.5" fill="none" stroke="#323130" stroke-width="1.5"/></svg>
<svg style="left:1777.00px;top:234.50px" width="11.00" height="8.70" viewBox="0 0 11.00 8.70"><path d="M1 1.5 L5.50 7.20 L10.00 1.5" fill="none" stroke="#323130" stroke-width="1.5"/></svg>
<svg style="left:1864.00px;top:142.00px" width="54.00" height="54.00" viewBox="0 0 54.00 54.00"><circle cx="33.7" cy="19.7" r="16.3" fill="#fafafa" stroke="#323130" stroke-width="1.6"/><path d="M22.5 31.5 L4 50" stroke="#323130" stroke-width="1.7"/></svg>
<svg style="left:1885.50px;top:234.50px" width="11.00" height="8.70" viewBox="0 0 11.00 8.70"><path d="M1 1.5 L5.50 7.20 L10.00 1.5" fill="none" stroke="#323130" stroke-width="1.5"/></svg>
<svg style="left:2133.00px;top:263.50px" width="20.00" height="14.00" viewBox="0 0 20.00 14.00"><path d="M2 10.5 L9.8 3 L17.5 10.5" fill="none" stroke="#111" stroke-width="1.6"/></svg>
<svg style="left:14.00px;top:154.00px" width="34.00" height="36.00" viewBox="0 0 34.00 36.00"><path d="M6.4 4.9 V16 H17.5 M6.4 16 L14.9 8.2 A7.8 7.8 0 0 1 25.9 19.2 L15 30.5" fill="none" stroke="#323130" stroke-width="1.6"/></svg>
<svg style="left:14.00px;top:201.00px" width="34.00" height="36.00" viewBox="0 0 34.00 36.00"><path d="M28.6 5.2 V15.6 H17.5 M28.6 15.6 L20.1 7.7 A7.9 7.9 0 0 0 8.9 18.9 L20 30" fill="none" stroke="#a19f9d" stroke-width="1.6"/></svg>
<svg style="left:108.00px;top:137.00px" width="50.00" height="54.00" viewBox="0 0 50.00 54.00"><rect x="3" y="9" width="33" height="39" fill="#fde7a8" stroke="#e07c12" stroke-width="2"/><rect x="6" y="12" width="27" height="33" fill="#fafafa"/><path d="M10.5 14 V9.5 H16 Q17 3.5 21 3.5 Q25 3.5 26 9.5 H31 V14 Z" fill="#f1f1f1" stroke="#7a7877" stroke-width="1.6"/><rect x="24.5" y="22" width="22" height="29.5" fill="#fafafa" stroke="#3b3a39" stroke-width="1.8"/></svg>
<svg style="left:172.00px;top:138.00px" width="30.00" height="34.00" viewBox="0 0 30.00 34.00"><path d="M9 4 L19 24 M21 4 L11 24" stroke="#3b3a39" stroke-width="1.3" fill="none"/><circle cx="10" cy="26.5" r="3" fill="none" stroke="#1a86d9" stroke-width="1.7"/><circle cx="19.5" cy="26.5" r="3" fill="none" stroke="#1a86d9" stroke-width="1.7"/></svg>
<svg style="left:172.00px;top:179.00px" width="30.00" height="30.00" viewBox="0 0 30.00 30.00"><path d="M2.5 23.5 V3 H12 L14.5 5.5 M2.5 23.5 H9.5" fill="none" stroke="#3b3a39" stroke-width="1.6"/><path d="M10.5 8 H20.5 L27 14.5 V28 H10.5 Z M20.5 8 V14.5 H27 M14 19.5 H23 M14 23 H23" fill="#fafafa" stroke="#3b3a39" stroke-width="1.6" stroke-linejoin="round"/></svg>
<svg style="left:172.00px;top:217.00px" width="32.00" height="32.00" viewBox="0 0 32.00 32.00"><path d="M12.9 9.5 Q8.5 13.8 2.3 15.2 L13.5 27.5 L21.7 19.2" fill="#fafafa" stroke="#e07c12" stroke-width="1.6" stroke-linejoin="round"/><path d="M5.1 17.3 L19.3 21.8 L13.5 27.5 Z" fill="#f8da88" stroke="#e07c12" stroke-width="1.6" stroke-linejoin="round"/><path d="M20.5 11.8 L26.3 4.5" stroke="#323130" stroke-width="5.4" stroke-linecap="round"/><path d="M20.5 11.8 L26.3 4.5" stroke="#fafafa" stroke-width="2.3" stroke-linecap="round"/><path d="M13 9.3 L15.5 6.5 L24.5 16 L22 19 Z" fill="#fafafa" stroke="#323130" stroke-width="1.5" stroke-linejoin="round"/></svg>
<svg style="left:122.00px;top:232.30px" width="11.00" height="8.70" viewBox="0 0 11.00 8.70"><path d="M1 1.5 L5.50 7.20 L10.00 1.5" fill="none" stroke="#323130" stroke-width="1.5"/></svg>
<svg style="left:191.00px;top:306.30px" width="11.70" height="8.50" viewBox="0 0 11.70 8.50"><path d="M1 1.5 L5.85 7.00 L10.70 1.5" fill="none" stroke="#222" stroke-width="1.5"/></svg>
<svg style="left:234.00px;top:297.00px" width="25.00" height="25.00" viewBox="0 0 25.00 25.00"><path d="M2.7 2.5 L22.4 21.5 M22.4 2.5 L2.7 21.5" stroke="#a8a8a8" stroke-width="1.4"/></svg>
<svg style="left:279.00px;top:297.00px" width="31.00" height="23.00" viewBox="0 0 31.00 23.00"><path d="M2.3 11 L10.5 19.7 L28.8 2.7" fill="none" stroke="#a8a8a8" stroke-width="1.4"/></svg>
<svg style="left:2130.00px;top:302.00px" width="20.00" height="15.00" viewBox="0 0 20.00 15.00"><path d="M2.4 3.2 L10 11.8 L17.8 3.2" fill="none" stroke="#111" stroke-width="1.6"/></svg>
<svg style="left:30.00px;top:344.00px" width="27.00" height="27.00" viewBox="0 0 27.00 27.00"><path d="M1.5 25.5 L25.5 1.5 V25.5 Z" fill="#b3b3b3"/></svg>
<svg style="left:2139.00px;top:380.00px" width="16.00" height="11.00" viewBox="0 0 16.00 11.00"><path d="M2 9 L8 2.5 L14 9 Z" fill="#7a7a7a"/></svg>
<svg style="left:2139.00px;top:1126.00px" width="16.00" height="11.00" viewBox="0 0 16.00 11.00"><path d="M2 2.5 L8 9 L14 2.5 Z" fill="#7a7a7a"/></svg>
<svg style="left:66.00px;top:1149.00px" width="14.00" height="14.00" viewBox="0 0 14.00 14.00"><path d="M9.5 2 L3.5 7 L9.5 12 Z" fill="#616161"/></svg>
<svg style="left:2116.00px;top:1149.00px" width="14.00" height="14.00" viewBox="0 0 14.00 14.00"><path d="M4.5 2 L10.5 7 L4.5 12 Z" fill="#616161"/></svg>
<svg style="left:16.00px;top:1182.00px" width="18.00" height="22.00" viewBox="0 0 18.00 22.00"><path d="M13.5 3 L4 11 L13.5 19" fill="none" stroke="#b3b3b3" stroke-width="1.5"/></svg>
<svg style="left:70.00px;top:1182.00px" width="18.00" height="22.00" viewBox="0 0 18.00 22.00"><path d="M4 3 L13.5 11 L4 19" fill="none" stroke="#b3b3b3" stroke-width="1.5"/></svg>
<svg style="left:280.00px;top:1180.00px" width="27.00" height="27.00" viewBox="0 0 27.00 27.00"><path d="M13.5 4 V22.7 M4 13.3 H23.5" stroke="#323130" stroke-width="1.6"/></svg>
<svg style="left:1649.20px;top:1237.90px" width="9.80" height="8.00" viewBox="0 0 9.80 8.00"><path d="M1 1.5 L4.90 6.50 L8.80 1.5" fill="none" stroke="#3b3a39" stroke-width="1.6"/></svg>
<svg style="left:2110.00px;top:1231.00px" width="24.00" height="21.00" viewBox="0 0 24.00 21.00"><path d="M11.7 1.7 V18.4 M1.8 10 H21.7" stroke="#3b3a39" stroke-width="1.6"/></svg>
<div class="t" style="left:90.54px;top:16.75px;font-family:'Liberation Sans';font-size:25.52px;font-weight:400;font-style:normal;color:#fff;transform:scaleX(0.9791);-webkit-text-stroke:0.9px #fff;">Excel</div>
<div class="t" style="left:187.75px;top:17.00px;font-family:'Liberation Sans';font-size:23.21px;font-weight:400;font-style:normal;color:#fff;transform:scaleX(0.9963);">Come ordinare i dati in un foglio di calcolo Excel</div>
<div class="t" style="left:709.00px;top:17.00px;font-family:'Liberation Sans';font-size:23.21px;font-weight:400;font-style:normal;color:#fff;transform:scaleX(1.0029);">Salvataggio completato</div>
<div class="t" style="left:1091.68px;top:16.60px;font-family:'Liberation Sans';font-size:21.86px;font-weight:400;font-style:normal;color:#0e6a37;transform:scaleX(1.0250);">Cerca (Alt + X)</div>
<div class="t" style="left:35.70px;top:82.00px;font-family:'Liberation Sans';font-size:23.00px;font-weight:400;font-style:normal;color:#323130;transform:scaleX(0.9016);">File</div>
<div class="t" style="left:131.95px;top:82.00px;font-family:'Liberation Sans';font-size:23.00px;font-weight:400;font-style:normal;color:#323130;transform:scaleX(1.0544);-webkit-text-stroke:0.6px #323130;">Home</div>
<div class="t" style="left:246.27px;top:82.00px;font-family:'Liberation Sans';font-size:23.00px;font-weight:400;font-style:normal;color:#323130;transform:scaleX(0.9626);">Inserisci</div>
<div class="t" style="left:380.21px;top:82.00px;font-family:'Liberation Sans';font-size:23.00px;font-weight:400;font-style:normal;color:#323130;transform:scaleX(0.9880);">Disegno</div>
<div class="t" style="left:516.00px;top:82.00px;font-family:'Liberation Sans';font-size:23.00px;font-weight:400;font-style:normal;color:#323130;">Layout di pagina</div>
<div class="t" style="left:737.99px;top:82.00px;font-family:'Liberation Sans';font-size:23.00px;font-weight:400;font-style:normal;color:#323130;transform:scaleX(1.0114);">Formule</div>
<div class="t" style="left:875.51px;top:82.00px;font-family:'Liberation Sans';font-size:23.00px;font-weight:400;font-style:normal;color:#323130;transform:scaleX(0.9925);">Dati</div>
<div class="t" style="left:966.54px;top:82.00px;font-family:'Liberation Sans';font-size:23.00px;font-weight:400;font-style:normal;color:#323130;transform:scaleX(0.9627);">Revisione</div>
<div class="t" style="left:1117.00px;top:82.00px;font-family:'Liberation Sans';font-size:23.00px;font-weight:400;font-style:normal;color:#323130;transform:scaleX(0.9483);">Visualizza</div>
<div class="t" style="left:1269.00px;top:82.00px;font-family:'Liberation Sans';font-size:23.00px;font-weight:400;font-style:normal;color:#323130;transform:scaleX(0.9940);">Automatizza</div>
<div class="t" style="left:1447.52px;top:82.00px;font-family:'Liberation Sans';font-size:23.00px;font-weight:400;font-style:normal;color:#323130;transform:scaleX(0.9821);">Guida</div>
<div class="t" style="left:1557.95px;top:82.00px;font-family:'Liberation Sans';font-size:23.00px;font-weight:400;font-style:normal;color:#107c41;transform:scaleX(1.0490);-webkit-text-stroke:0.45px #107c41;">Struttura tabella</div>
<div class="t" style="left:1937.20px;top:86.30px;font-family:'Liberation Sans';font-size:22.14px;font-weight:400;font-style:normal;color:#fff;transform:scaleX(1.1034);-webkit-text-stroke:0.7px #fff;">Condividi</div>
<div class="t" style="left:12.50px;top:252.70px;font-family:'Liberation Sans';font-size:16.71px;font-weight:400;font-style:normal;color:#323130;transform:scaleX(0.9718);">Annulla</div>
<div class="t" style="left:122.40px;top:252.70px;font-family:'Liberation Sans';font-size:16.71px;font-weight:400;font-style:normal;color:#323130;transform:scaleX(1.0306);">Appunti</div>
<div class="t" style="left:391.25px;top:252.70px;font-family:'Liberation Sans';font-size:16.71px;font-weight:400;font-style:normal;color:#323130;transform:scaleX(0.9563);">Carattere</div>
<div class="t" style="left:755.00px;top:252.70px;font-family:'Liberation Sans';font-size:16.71px;font-weight:400;font-style:normal;color:#323130;transform:scaleX(0.9928);">Allineamento</div>
<div class="t" style="left:1069.17px;top:252.70px;font-family:'Liberation Sans';font-size:16.71px;font-weight:400;font-style:normal;color:#323130;transform:scaleX(1.0263);">Numero</div>
<div class="t" style="left:1391.30px;top:252.70px;font-family:'Liberation Sans';font-size:16.71px;font-weight:400;font-style:normal;color:#323130;transform:scaleX(0.9816);">Stili</div>
<div class="t" style="left:1694.60px;top:252.70px;font-family:'Liberation Sans';font-size:16.71px;font-weight:400;font-style:normal;color:#323130;transform:scaleX(0.9511);">Celle</div>
<div class="t" style="left:99.65px;top:190.20px;font-family:'Liberation Sans';font-size:20.29px;font-weight:400;font-style:normal;color:#323130;transform:scaleX(0.9495);">Incolla</div>
<div class="t" style="left:242.65px;top:154.30px;font-family:'Liberation Sans';font-size:20.43px;font-weight:400;font-style:normal;color:#323130;transform:scaleX(0.9532);">Calibri</div>
<div class="t" style="left:453.10px;top:153.80px;font-family:'Liberation Sans';font-size:19.86px;font-weight:400;font-style:normal;color:#323130;transform:scaleX(0.8993);">11</div>
<div class="t" style="left:541.50px;top:150.80px;font-family:'Liberation Sans';font-size:31.14px;font-weight:400;font-style:normal;color:#323130;transform:scaleX(0.8381);">A</div>
<div class="t" style="left:584.00px;top:152.80px;font-family:'Liberation Sans';font-size:24.14px;font-weight:400;font-style:normal;color:#323130;transform:scaleX(0.8235);">A</div>
<div class="t" style="left:246.90px;top:198.10px;font-family:'Liberation Sans';font-size:22.14px;font-weight:700;font-style:normal;color:#3b3a39;transform:scaleX(0.9125);">G</div>
<div class="t" style="left:286.07px;top:198.10px;font-family:'Liberation Sans';font-size:22.14px;font-weight:400;font-style:normal;color:#3b3a39;transform:scaleX(0.9267);">C</div>
<div class="t" style="left:328.31px;top:198.10px;font-family:'Liberation Sans';font-size:22.14px;font-weight:400;font-style:normal;color:#3b3a39;transform:scaleX(0.6923);">S</div>
<div class="t" style="left:366.07px;top:198.10px;font-family:'Liberation Sans';font-size:22.14px;font-weight:400;font-style:normal;color:#3b3a39;transform:scaleX(0.9286);">D</div>
<div class="t" style="left:402.80px;top:200.10px;font-family:'Liberation Sans';font-size:21.94px;font-weight:400;font-style:normal;color:#3b3a39;transform:scaleX(0.8016);">ab</div>
<div class="t" style="left:556.20px;top:195.50px;font-family:'Liberation Sans';font-size:26.43px;font-weight:400;font-style:normal;color:#323130;transform:scaleX(0.8556);">A</div>
<div class="t" style="left:814.30px;top:152.50px;font-family:'Liberation Sans';font-size:19.43px;font-weight:400;font-style:normal;color:#323130;transform:scaleX(0.9869);">Testo a capo</div>
<div class="t" style="left:813.34px;top:199.70px;font-family:'Liberation Sans';font-size:20.00px;font-weight:400;font-style:normal;color:#a19f9d;transform:scaleX(0.9565);">Unisci e centra</div>
<div class="t" style="left:1000.60px;top:153.80px;font-family:'Liberation Sans';font-size:19.71px;font-weight:400;font-style:normal;color:#323130;transform:scaleX(0.9630);">Valuta</div>
<div class="t" style="left:1004.50px;top:199.00px;font-family:'Liberation Sans';font-size:27.86px;font-weight:400;font-style:normal;color:#3b3a39;transform:scaleX(0.7500);">$</div>
<div class="t" style="left:1053.07px;top:199.30px;font-family:'Liberation Sans';font-size:32.29px;font-weight:400;font-style:normal;color:#3b3a39;transform:scaleX(0.9259);">%</div>
<div class="t" style="left:1093.50px;top:198.00px;font-family:'Liberation Sans';font-size:17.43px;font-weight:400;font-style:normal;color:#3b3a39;transform:scaleX(0.8476);">000</div>
<div class="t" style="left:1239.80px;top:191.40px;font-family:'Liberation Sans';font-size:19.57px;font-weight:400;font-style:normal;color:#323130;transform:scaleX(0.9979);">Formattazione</div>
<div class="t" style="left:1238.30px;top:217.20px;font-family:'Liberation Sans';font-size:19.57px;font-weight:400;font-style:normal;color:#323130;transform:scaleX(1.0039);">condizionale</div>
<div class="t" style="left:1372.70px;top:191.40px;font-family:'Liberation Sans';font-size:19.57px;font-weight:400;font-style:normal;color:#323130;">Formatta come</div>
<div class="t" style="left:1400.90px;top:217.20px;font-family:'Liberation Sans';font-size:19.57px;font-weight:400;font-style:normal;color:#323130;transform:scaleX(0.9815);">tabella</div>
<div class="t" style="left:1525.50px;top:191.40px;font-family:'Liberation Sans';font-size:19.57px;font-weight:400;font-style:normal;color:#323130;transform:scaleX(0.9527);">Stili</div>
<div class="t" style="left:1604.34px;top:193.90px;font-family:'Liberation Sans';font-size:19.57px;font-weight:400;font-style:normal;color:#323130;transform:scaleX(0.9602);">Inserisci</div>
<div class="t" style="left:1679.04px;top:193.90px;font-family:'Liberation Sans';font-size:19.57px;font-weight:400;font-style:normal;color:#323130;transform:scaleX(0.9627);">Elimina</div>
<div class="t" style="left:1747.00px;top:191.40px;font-family:'Liberation Sans';font-size:19.57px;font-weight:400;font-style:normal;color:#323130;transform:scaleX(1.0020);">Formato</div>
<div class="t" style="left:1853.76px;top:191.40px;font-family:'Liberation Sans';font-size:19.57px;font-weight:400;font-style:normal;color:#323130;transform:scaleX(1.0352);">Modifica</div>
<div class="t" style="left:13.80px;top:290.80px;font-family:'Liberation Sans';font-size:20.00px;font-weight:400;font-style:normal;color:#222;transform:scaleX(0.8959);">D3</div>
<div class="t" style="left:333.00px;top:288.00px;font-family:'Liberation Serif';font-size:25.00px;font-weight:400;font-style:italic;color:#222;transform:scaleX(1.0587);">fx</div>
<div class="t" style="left:377.00px;top:287.90px;font-family:'Liberation Sans';font-size:21.29px;font-weight:400;font-style:normal;color:#222;transform:scaleX(1.0318);">40000</div>
<div class="t" style="left:467.41px;top:396.10px;font-family:'Liberation Sans';font-size:31.14px;font-weight:700;font-style:normal;color:#fff;transform:scaleX(0.8969);-webkit-text-stroke:0.5px #fff;">INFORMAZIONI IMPIEGATI</div>
<div class="t" style="left:146.08px;top:461.70px;font-family:'Liberation Sans';font-size:24.86px;font-weight:700;font-style:normal;color:#fff;transform:scaleX(0.9178);-webkit-text-stroke:0.4px #fff;">NOME</div>
<div class="t" style="left:369.72px;top:462.00px;font-family:'Liberation Sans';font-size:24.86px;font-weight:700;font-style:normal;color:#fff;transform:scaleX(0.8769);-webkit-text-stroke:0.4px #fff;">DATA ASSUNZIONE</div>
<div class="t" style="left:765.06px;top:461.90px;font-family:'Liberation Sans';font-size:24.86px;font-weight:700;font-style:normal;color:#fff;transform:scaleX(0.8366);-webkit-text-stroke:0.4px #fff;">ETÀ</div>
<div class="t" style="left:1032.50px;top:462.00px;font-family:'Liberation Sans';font-size:24.86px;font-weight:700;font-style:normal;color:#fff;transform:scaleX(0.8446);-webkit-text-stroke:0.4px #fff;">SALARIO</div>
<div class="t" style="left:62.85px;top:504.70px;font-family:'Liberation Sans';font-size:20.86px;font-weight:400;font-style:normal;color:#000;transform:scaleX(1.0493);">Giacomo</div>
<div class="t" style="left:518.36px;top:504.70px;font-family:'Liberation Sans';font-size:20.86px;font-weight:400;font-style:normal;color:#000;transform:scaleX(1.1398);">11/12/2008</div>
<div class="t" style="left:899.54px;top:504.70px;font-family:'Liberation Sans';font-size:20.86px;font-weight:400;font-style:normal;color:#000;transform:scaleX(1.1398);">44</div>
<div class="t" style="left:1107.80px;top:504.70px;font-family:'Liberation Sans';font-size:20.86px;font-weight:400;font-style:normal;color:#000;transform:scaleX(1.0408);">40.000,00 €</div>
<div class="t" style="left:63.90px;top:537.70px;font-family:'Liberation Sans';font-size:20.86px;font-weight:400;font-style:normal;color:#000;transform:scaleX(1.0493);">Sara</div>
<div class="t" style="left:516.60px;top:537.70px;font-family:'Liberation Sans';font-size:20.86px;font-weight:400;font-style:normal;color:#000;transform:scaleX(1.1398);">14/02/2010</div>
<div class="t" style="left:899.54px;top:537.70px;font-family:'Liberation Sans';font-size:20.86px;font-weight:400;font-style:normal;color:#000;transform:scaleX(1.1398);">31</div>
<div class="t" style="left:1107.80px;top:537.70px;font-family:'Liberation Sans';font-size:20.86px;font-weight:400;font-style:normal;color:#000;transform:scaleX(1.0408);">33.000,00 €</div>
<div class="t" style="left:62.85px;top:570.70px;font-family:'Liberation Sans';font-size:20.86px;font-weight:400;font-style:normal;color:#000;transform:scaleX(1.0493);">Luigi</div>
<div class="t" style="left:516.60px;top:570.70px;font-family:'Liberation Sans';font-size:20.86px;font-weight:400;font-style:normal;color:#000;transform:scaleX(1.1398);">01/05/2019</div>
<div class="t" style="left:899.54px;top:570.70px;font-family:'Liberation Sans';font-size:20.86px;font-weight:400;font-style:normal;color:#000;transform:scaleX(1.1398);">25</div>
<div class="t" style="left:1107.80px;top:570.70px;font-family:'Liberation Sans';font-size:20.86px;font-weight:400;font-style:normal;color:#000;transform:scaleX(1.0408);">21.000,00 €</div>
<div class="t" style="left:63.90px;top:603.70px;font-family:'Liberation Sans';font-size:20.86px;font-weight:400;font-style:normal;color:#000;transform:scaleX(1.0493);">Sofia</div>
<div class="t" style="left:516.60px;top:603.70px;font-family:'Liberation Sans';font-size:20.86px;font-weight:400;font-style:normal;color:#000;transform:scaleX(1.1398);">07/08/2001</div>
<div class="t" style="left:899.54px;top:603.70px;font-family:'Liberation Sans';font-size:20.86px;font-weight:400;font-style:normal;color:#000;transform:scaleX(1.1398);">28</div>
<div class="t" style="left:1107.80px;top:603.70px;font-family:'Liberation Sans';font-size:20.86px;font-weight:400;font-style:normal;color:#000;transform:scaleX(1.0408);">26.000,00 €</div>
<div class="t" style="left:63.90px;top:636.70px;font-family:'Liberation Sans';font-size:20.86px;font-weight:400;font-style:normal;color:#000;transform:scaleX(1.0493);">Alessandro</div>
<div class="t" style="left:516.60px;top:636.70px;font-family:'Liberation Sans';font-size:20.86px;font-weight:400;font-style:normal;color:#000;transform:scaleX(1.1398);">21/09/2014</div>
<div class="t" style="left:899.54px;top:636.70px;font-family:'Liberation Sans';font-size:20.86px;font-weight:400;font-style:normal;color:#000;transform:scaleX(1.1398);">20</div>
<div class="t" style="left:1107.80px;top:636.70px;font-family:'Liberation Sans';font-size:20.86px;font-weight:400;font-style:normal;color:#000;transform:scaleX(1.0408);">18.000,00 €</div>
<div class="t" style="left:62.85px;top:669.70px;font-family:'Liberation Sans';font-size:20.86px;font-weight:400;font-style:normal;color:#000;transform:scaleX(1.0493);">Francesco</div>
<div class="t" style="left:516.60px;top:669.70px;font-family:'Liberation Sans';font-size:20.86px;font-weight:400;font-style:normal;color:#000;transform:scaleX(1.1398);">15/03/2015</div>
<div class="t" style="left:899.54px;top:669.70px;font-family:'Liberation Sans';font-size:20.86px;font-weight:400;font-style:normal;color:#000;transform:scaleX(1.1398);">39</div>
<div class="t" style="left:1107.80px;top:669.70px;font-family:'Liberation Sans';font-size:20.86px;font-weight:400;font-style:normal;color:#000;transform:scaleX(1.0408);">55.000,00 €</div>
<div class="t" style="left:63.90px;top:702.70px;font-family:'Liberation Sans';font-size:20.86px;font-weight:400;font-style:normal;color:#000;transform:scaleX(1.0493);">Simona</div>
<div class="t" style="left:518.36px;top:702.70px;font-family:'Liberation Sans';font-size:20.86px;font-weight:400;font-style:normal;color:#000;transform:scaleX(1.1398);">05/11/2020</div>
<div class="t" style="left:899.54px;top:702.70px;font-family:'Liberation Sans';font-size:20.86px;font-weight:400;font-style:normal;color:#000;transform:scaleX(1.1398);">27</div>
<div class="t" style="left:1107.80px;top:702.70px;font-family:'Liberation Sans';font-size:20.86px;font-weight:400;font-style:normal;color:#000;transform:scaleX(1.0408);">42.000,00 €</div>
<div class="t" style="left:63.90px;top:735.70px;font-family:'Liberation Sans';font-size:20.86px;font-weight:400;font-style:normal;color:#000;transform:scaleX(1.0493);">Arianna</div>
<div class="t" style="left:516.60px;top:735.70px;font-family:'Liberation Sans';font-size:20.86px;font-weight:400;font-style:normal;color:#000;transform:scaleX(1.1398);">09/07/2017</div>
<div class="t" style="left:899.54px;top:735.70px;font-family:'Liberation Sans';font-size:20.86px;font-weight:400;font-style:normal;color:#000;transform:scaleX(1.1398);">48</div>
<div class="t" style="left:1107.80px;top:735.70px;font-family:'Liberation Sans';font-size:20.86px;font-weight:400;font-style:normal;color:#000;transform:scaleX(1.0408);">70.000,00 €</div>
<div class="t" style="left:62.85px;top:768.70px;font-family:'Liberation Sans';font-size:20.86px;font-weight:400;font-style:normal;color:#000;transform:scaleX(1.0493);">Riccardo</div>
<div class="t" style="left:516.60px;top:768.70px;font-family:'Liberation Sans';font-size:20.86px;font-weight:400;font-style:normal;color:#000;transform:scaleX(1.1398);">18/10/2005</div>
<div class="t" style="left:899.54px;top:768.70px;font-family:'Liberation Sans';font-size:20.86px;font-weight:400;font-style:normal;color:#000;transform:scaleX(1.1398);">33</div>
<div class="t" style="left:1107.80px;top:768.70px;font-family:'Liberation Sans';font-size:20.86px;font-weight:400;font-style:normal;color:#000;transform:scaleX(1.0408);">35.000,00 €</div>
<div class="t" style="left:62.85px;top:801.70px;font-family:'Liberation Sans';font-size:20.86px;font-weight:400;font-style:normal;color:#000;transform:scaleX(1.0493);">Beatrice</div>
<div class="t" style="left:516.60px;top:801.70px;font-family:'Liberation Sans';font-size:20.86px;font-weight:400;font-style:normal;color:#000;transform:scaleX(1.1398);">26/04/2016</div>
<div class="t" style="left:899.54px;top:801.70px;font-family:'Liberation Sans';font-size:20.86px;font-weight:400;font-style:normal;color:#000;transform:scaleX(1.1398);">29</div>
<div class="t" style="left:1107.80px;top:801.70px;font-family:'Liberation Sans';font-size:20.86px;font-weight:400;font-style:normal;color:#000;transform:scaleX(1.0408);">27.000,00 €</div>
<div class="t" style="left:62.85px;top:834.70px;font-family:'Liberation Sans';font-size:20.86px;font-weight:400;font-style:normal;color:#000;transform:scaleX(1.0493);">Claudio</div>
<div class="t" style="left:516.60px;top:834.70px;font-family:'Liberation Sans';font-size:20.86px;font-weight:400;font-style:normal;color:#000;transform:scaleX(1.1398);">30/06/2007</div>
<div class="t" style="left:899.54px;top:834.70px;font-family:'Liberation Sans';font-size:20.86px;font-weight:400;font-style:normal;color:#000;transform:scaleX(1.1398);">46</div>
<div class="t" style="left:1107.80px;top:834.70px;font-family:'Liberation Sans';font-size:20.86px;font-weight:400;font-style:normal;color:#000;transform:scaleX(1.0408);">66.000,00 €</div>
<div class="t" style="left:171.20px;top:337.00px;font-family:'Liberation Sans';font-size:23.14px;font-weight:400;font-style:normal;color:#616161;">A</div>
<div class="t" style="left:461.50px;top:337.00px;font-family:'Liberation Sans';font-size:23.14px;font-weight:400;font-style:normal;color:#616161;">B</div>
<div class="t" style="left:776.00px;top:337.00px;font-family:'Liberation Sans';font-size:23.14px;font-weight:400;font-style:normal;color:#616161;">C</div>
<div class="t" style="left:1069.50px;top:337.00px;font-family:'Liberation Sans';font-size:23.14px;font-weight:700;font-style:normal;color:#1f7144;">D</div>
<div class="t" style="left:1271.50px;top:337.00px;font-family:'Liberation Sans';font-size:23.14px;font-weight:400;font-style:normal;color:#616161;">E</div>
<div class="t" style="left:1377.50px;top:337.00px;font-family:'Liberation Sans';font-size:23.14px;font-weight:400;font-style:normal;color:#616161;">F</div>
<div class="t" style="left:1481.50px;top:337.00px;font-family:'Liberation Sans';font-size:23.14px;font-weight:400;font-style:normal;color:#616161;">G</div>
<div class="t" style="left:1588.00px;top:337.00px;font-family:'Liberation Sans';font-size:23.14px;font-weight:400;font-style:normal;color:#616161;">H</div>
<div class="t" style="left:1698.00px;top:337.00px;font-family:'Liberation Sans';font-size:23.14px;font-weight:400;font-style:normal;color:#616161;">I</div>
<div class="t" style="left:1802.50px;top:337.00px;font-family:'Liberation Sans';font-size:23.14px;font-weight:400;font-style:normal;color:#616161;">J</div>
<div class="t" style="left:1904.50px;top:337.00px;font-family:'Liberation Sans';font-size:23.14px;font-weight:400;font-style:normal;color:#616161;">K</div>
<div class="t" style="left:2011.50px;top:337.00px;font-family:'Liberation Sans';font-size:23.14px;font-weight:400;font-style:normal;color:#616161;">L</div>
<div class="t" style="left:2115.00px;top:337.00px;font-family:'Liberation Sans';font-size:23.14px;font-weight:400;font-style:normal;color:#616161;">M</div>
<div class="t" style="left:21.64px;top:419.00px;font-family:'Liberation Sans';font-size:22.14px;font-weight:400;font-style:normal;color:#616161;transform:scaleX(0.8700);">1</div>
<div class="t" style="left:21.64px;top:472.00px;font-family:'Liberation Sans';font-size:22.14px;font-weight:400;font-style:normal;color:#616161;transform:scaleX(0.8700);">2</div>
<div class="t" style="left:22.08px;top:505.00px;font-family:'Liberation Sans';font-size:22.14px;font-weight:700;font-style:normal;color:#1f7144;transform:scaleX(0.8700);">3</div>
<div class="t" style="left:22.08px;top:538.00px;font-family:'Liberation Sans';font-size:22.14px;font-weight:400;font-style:normal;color:#616161;transform:scaleX(0.8700);">4</div>
<div class="t" style="left:22.08px;top:571.00px;font-family:'Liberation Sans';font-size:22.14px;font-weight:400;font-style:normal;color:#616161;transform:scaleX(0.8700);">5</div>
<div class="t" style="left:21.64px;top:604.00px;font-family:'Liberation Sans';font-size:22.14px;font-weight:400;font-style:normal;color:#616161;transform:scaleX(0.8700);">6</div>
<div class="t" style="left:21.64px;top:637.00px;font-family:'Liberation Sans';font-size:22.14px;font-weight:400;font-style:normal;color:#616161;transform:scaleX(0.8700);">7</div>
<div class="t" style="left:22.08px;top:670.00px;font-family:'Liberation Sans';font-size:22.14px;font-weight:400;font-style:normal;color:#616161;transform:scaleX(0.8700);">8</div>
<div class="t" style="left:21.64px;top:703.00px;font-family:'Liberation Sans';font-size:22.14px;font-weight:400;font-style:normal;color:#616161;transform:scaleX(0.8700);">9</div>
<div class="t" style="left:16.29px;top:736.00px;font-family:'Liberation Sans';font-size:22.14px;font-weight:400;font-style:normal;color:#616161;transform:scaleX(0.8700);">10</div>
<div class="t" style="left:17.01px;top:769.00px;font-family:'Liberation Sans';font-size:22.14px;font-weight:400;font-style:normal;color:#616161;transform:scaleX(0.8700);">11</div>
<div class="t" style="left:16.29px;top:802.00px;font-family:'Liberation Sans';font-size:22.14px;font-weight:400;font-style:normal;color:#616161;transform:scaleX(0.8700);">12</div>
<div class="t" style="left:16.29px;top:835.00px;font-family:'Liberation Sans';font-size:22.14px;font-weight:400;font-style:normal;color:#616161;transform:scaleX(0.8700);">13</div>
<div class="t" style="left:16.29px;top:868.00px;font-family:'Liberation Sans';font-size:22.14px;font-weight:400;font-style:normal;color:#616161;transform:scaleX(0.8700);">14</div>
<div class="t" style="left:16.29px;top:901.00px;font-family:'Liberation Sans';font-size:22.14px;font-weight:400;font-style:normal;color:#616161;transform:scaleX(0.8700);">15</div>
<div class="t" style="left:16.29px;top:934.00px;font-family:'Liberation Sans';font-size:22.14px;font-weight:400;font-style:normal;color:#616161;transform:scaleX(0.8700);">16</div>
<div class="t" style="left:16.29px;top:967.00px;font-family:'Liberation Sans';font-size:22.14px;font-weight:400;font-style:normal;color:#616161;transform:scaleX(0.8700);">17</div>
<div class="t" style="left:16.29px;top:1000.00px;font-family:'Liberation Sans';font-size:22.14px;font-weight:400;font-style:normal;color:#616161;transform:scaleX(0.8700);">18</div>
<div class="t" style="left:16.29px;top:1033.00px;font-family:'Liberation Sans';font-size:22.14px;font-weight:400;font-style:normal;color:#616161;transform:scaleX(0.8700);">19</div>
<div class="t" style="left:16.29px;top:1066.00px;font-family:'Liberation Sans';font-size:22.14px;font-weight:400;font-style:normal;color:#616161;transform:scaleX(0.8700);">20</div>
<div class="t" style="left:16.29px;top:1099.00px;font-family:'Liberation Sans';font-size:22.14px;font-weight:400;font-style:normal;color:#616161;transform:scaleX(0.8700);">21</div>
<div class="t" style="left:175.71px;top:1173.00px;font-family:'Liberation Sans';font-size:23.14px;font-weight:400;font-style:normal;color:#323130;transform:scaleX(0.9867);-webkit-text-stroke:0.7px #323130;">Foglio1</div>
<div class="t" style="left:21.05px;top:1222.00px;font-family:'Liberation Sans';font-size:21.29px;font-weight:400;font-style:normal;color:#484644;transform:scaleX(0.9478);">Modalità di calcolo: Automatico</div>
<div class="t" style="left:327.50px;top:1222.00px;font-family:'Liberation Sans';font-size:21.29px;font-weight:400;font-style:normal;color:#484644;transform:scaleX(0.9229);">Statistiche cartella di lavoro</div>
<div class="t" style="left:1726.87px;top:1222.00px;font-family:'Liberation Sans';font-size:21.29px;font-weight:400;font-style:normal;color:#484644;transform:scaleX(0.9257);">Invia feedback a Microsoft</div>
<div class="t" style="left:2055.14px;top:1222.00px;font-family:'Liberation Sans';font-size:21.29px;font-weight:400;font-style:normal;color:#484644;transform:scaleX(0.8560);">100%</div>
</body></html>
